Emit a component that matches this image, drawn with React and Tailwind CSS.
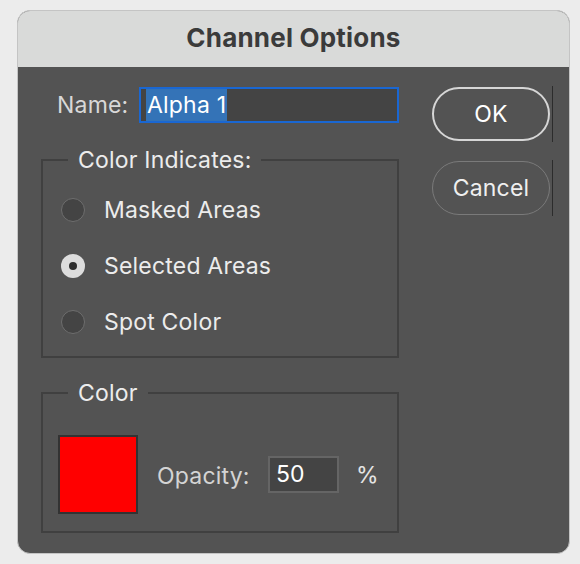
import React from 'react';

const font = { fontFamily: 'Inter, "Noto Sans", sans-serif' };

const Radio = ({ checked, label }) => (
  <div className="flex items-center h-[56px]">
    {checked ? (
      <span className="w-[24px] h-[24px] rounded-full bg-[#dddddd] flex items-center justify-center">
        <span className="w-[8px] h-[8px] rounded-full bg-[#2f2f2f]" />
      </span>
    ) : (
      <span className="w-[24px] h-[24px] rounded-full bg-[#444444] border-[1.5px] border-[#6e6e6e]" />
    )}
    <span className="ml-[19px] text-[23px] tracking-[0.2px] text-[#ececec]">{label}</span>
  </div>
);

const DialogButton = ({ children, primary }) => (
  <div className="flex items-center">
    <button
      className={`w-[118px] h-[54px] rounded-full text-[23px] tracking-[0.2px] ${
        primary ? 'border-2 border-[#d6d6d6] text-white' : 'border-[1.5px] border-[#7a7a7a] text-[#efefef]'
      }`}
    >
      {children}
    </button>
    <span className="ml-[2px] w-px h-[56px] bg-[#2c2c2c]" />
  </div>
);

export default function App() {
  return (
    <div className="w-[580px] h-[564px] bg-[#ececec] pt-[10px] pl-[17px]" style={font}>
      <div className="w-[553px] h-[544px] rounded-[13px] border border-[#c4c4c4] overflow-hidden flex flex-col bg-[#535353]">
        {/* Title bar */}
        <div className="h-[56px] bg-[#d9dad9] flex items-center justify-center pb-[4px]">
          <span className="text-[26px] font-bold tracking-[0.2px] text-[#3b3b3b]">Channel Options</span>
        </div>

        {/* Body */}
        <div className="flex pl-[23px] pr-[16px] pt-[20px]">
          <div className="w-[358px] flex flex-col">
            {/* Name row */}
            <div className="flex items-center h-[36px]">
              <span className="ml-[16px] text-[23px] tracking-[0.2px] text-[#d8d8d8]">Name:</span>
              <div className="ml-auto w-[260px] h-[36px] border-2 border-[#1a67d2] bg-[#444444] pl-[5px] flex items-stretch">
                <span className="bg-[#3473b7] text-white text-[23px] tracking-[0.2px] leading-[32px] px-[1px]">Alpha 1</span>
              </div>
            </div>

            {/* Color Indicates */}
            <fieldset className="mt-[24px] border-2 border-[#404040] pt-[9px] pb-[6px] pl-[18px]">
              <legend className="ml-[7px] px-[10px] text-[23px] tracking-[0.2px] leading-[26px] text-[#ececec]">Color Indicates:</legend>
              <Radio label="Masked Areas" />
              <Radio checked label="Selected Areas" />
              <Radio label="Spot Color" />
            </fieldset>

            {/* Color */}
            <fieldset className="mt-[22px] border-2 border-[#404040] pt-[29px] pb-[17px] pl-[15px]">
              <legend className="ml-[10px] px-[10px] text-[23px] tracking-[0.2px] leading-[26px] text-[#ececec]">Color</legend>
              <div className="flex items-center">
                <div className="w-[80px] h-[79px] bg-[#ff0000] border-2 border-[#333333]" />
                <span className="ml-[19px] mt-[4px] w-[111px] text-[23px] tracking-[0.2px] text-[#d4d4d4]">Opacity:</span>
                <div className="w-[71px] h-[37px] bg-[#444444] border-2 border-[#656565] pl-[6px] flex items-center">
                  <span className="text-[23px] text-white">50</span>
                </div>
                <span className="ml-[17px] mt-[2px] text-[23px] text-[#e4e4e4]">%</span>
              </div>
            </fieldset>
          </div>

          {/* Buttons */}
          <div className="ml-[33px] flex flex-col gap-[18px] -mt-px">
            <DialogButton primary>OK</DialogButton>
            <DialogButton>Cancel</DialogButton>
          </div>
        </div>
      </div>
    </div>
  );
}
